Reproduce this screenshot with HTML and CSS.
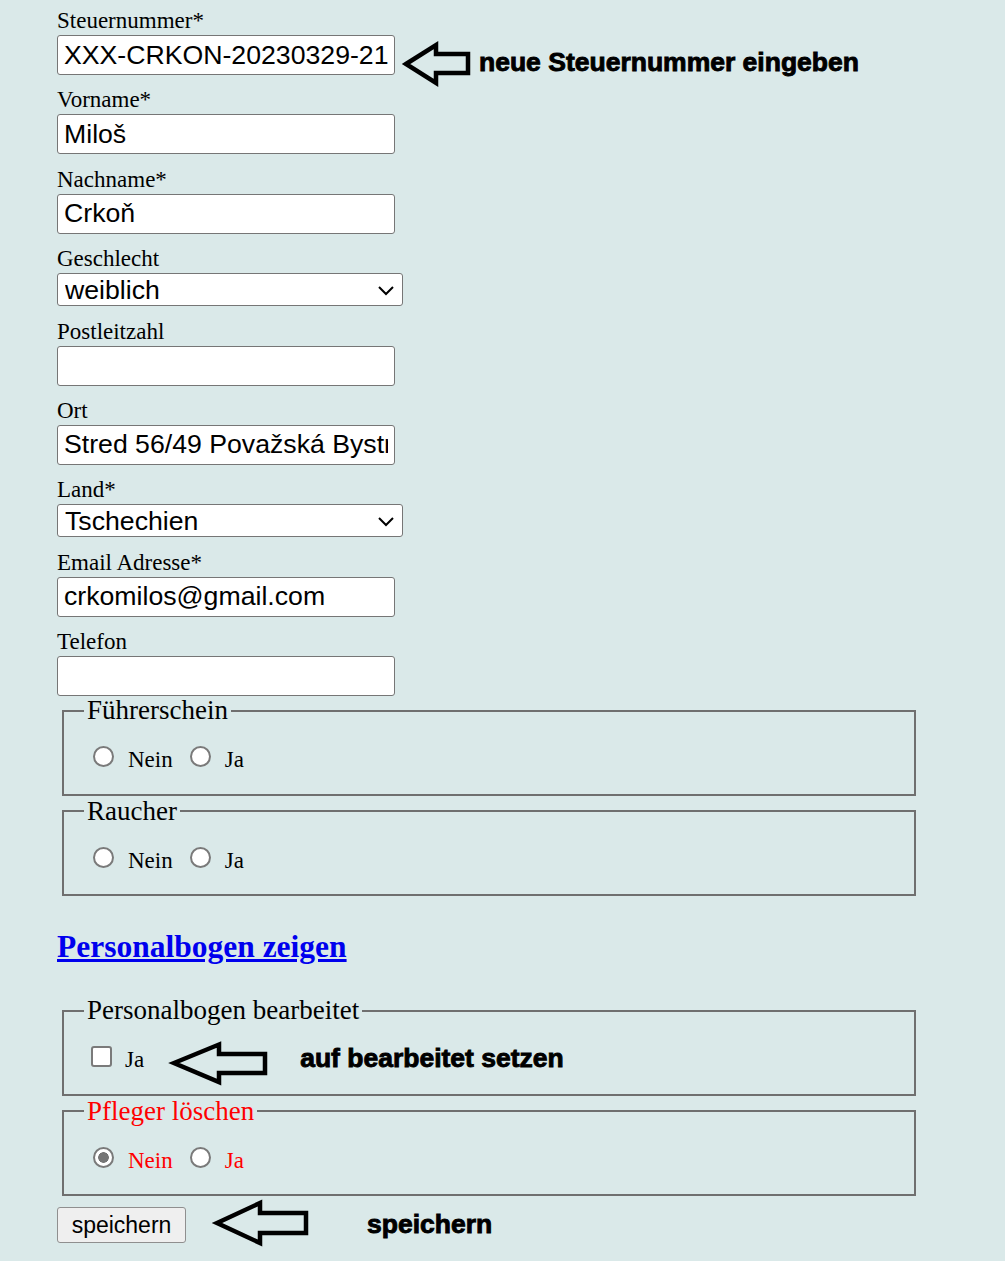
FILE: index.html
```html
<!DOCTYPE html>
<html lang="de">
<head>
<meta charset="utf-8">
<title>Pfleger bearbeiten</title>
<link rel="stylesheet" href="styles.css">
</head>
<body>
<form class="page">
  <div class="field">
    <label class="lbl" for="st">Steuernummer*</label>
    <div class="row">
      <input class="txt" id="st" type="text" value="XXX-CRKON-20230329-2145">
      <svg class="arrow a1" viewBox="0 0 68 44"><polygon points="3,22 33,3 33,12 65,12 65,31 33,31 33,41"/></svg>
      <span class="note n1">neue Steuernummer eingeben</span>
    </div>
  </div>
  <div class="field">
    <label class="lbl" for="vn">Vorname*</label>
    <input class="txt" id="vn" type="text" value="Miloš">
  </div>
  <div class="field">
    <label class="lbl" for="nn">Nachname*</label>
    <input class="txt" id="nn" type="text" value="Crkoň">
  </div>
  <div class="field">
    <label class="lbl" for="gs">Geschlecht</label>
    <div class="select-wrap">
      <select class="sel" id="gs">
        <option>männlich</option>
        <option selected>weiblich</option>
        <option>divers</option>
      </select>
      <svg class="chev" viewBox="0 0 16 9"><polyline points="1,1 8,8 15,1"/></svg>
    </div>
  </div>
  <div class="field">
    <label class="lbl" for="plz">Postleitzahl</label>
    <input class="txt" id="plz" type="text" value="">
  </div>
  <div class="field">
    <label class="lbl" for="ort">Ort</label>
    <input class="txt" id="ort" type="text" value="Stred 56/49 Považská Bystrica">
  </div>
  <div class="field">
    <label class="lbl" for="land">Land*</label>
    <div class="select-wrap">
      <select class="sel" id="land">
        <option>Deutschland</option>
        <option>Österreich</option>
        <option>Slowakei</option>
        <option selected>Tschechien</option>
      </select>
      <svg class="chev" viewBox="0 0 16 9"><polyline points="1,1 8,8 15,1"/></svg>
    </div>
  </div>
  <div class="field">
    <label class="lbl" for="em">Email Adresse*</label>
    <input class="txt" id="em" type="text" value="crkomilos@gmail.com">
  </div>
  <div class="field">
    <label class="lbl" for="tel">Telefon</label>
    <input class="txt" id="tel" type="text" value="">
  </div>

  <fieldset class="box first">
    <legend>Führerschein</legend>
    <input class="rad r1" type="radio" name="fs" id="fs0"><label for="fs0">Nein</label><input class="rad r2" type="radio" name="fs" id="fs1"><label for="fs1">Ja</label>
  </fieldset>
  <fieldset class="box">
    <legend>Raucher</legend>
    <input class="rad r1" type="radio" name="ra" id="ra0"><label for="ra0">Nein</label><input class="rad r2" type="radio" name="ra" id="ra1"><label for="ra1">Ja</label>
  </fieldset>

  <p class="show"><a href="#">Personalbogen zeigen</a></p>

  <fieldset class="box">
    <legend>Personalbogen bearbeitet</legend>
    <input class="chk" type="checkbox" id="pb"><label for="pb">Ja</label><svg class="arrow a2" viewBox="0 0 96 43"><polygon points="3,21 48,2.5 48,12 94,12 94,31 48,31 48,40"/></svg><span class="note n2">auf bearbeitet setzen</span>
  </fieldset>
  <fieldset class="box danger">
    <legend>Pfleger löschen</legend>
    <input class="rad r1" type="radio" name="del" id="del0" checked><label for="del0">Nein</label><input class="rad r2" type="radio" name="del" id="del1"><label for="del1">Ja</label>
  </fieldset>

  <div class="row btnrow">
    <button class="btn" type="button">speichern</button>
    <svg class="arrow a3" viewBox="0 0 95 44"><polygon points="3,22 46,2 46,12 92,12 92,32 46,32 46,42"/></svg>
    <span class="note n3">speichern</span>
  </div>
</form>
</body>
</html>
```

FILE: styles.css
```css
html, body {
  margin: 0;
  padding: 0;
}

body {
  background: #dae9e9;
  color: #000;
  font-family: "Liberation Serif", "Times New Roman", serif;
}

.page {
  display: block;
  padding: 8px 0 20px 57px;
}

.field + .field {
  margin-top: 12.4px;
}

.lbl {
  display: block;
  font-size: 23px;
  line-height: 26px;
  margin-bottom: 1px;
}

.txt {
  display: block;
  box-sizing: border-box;
  width: 338px;
  height: 40px;
  margin: 0;
  padding: 0 6px;
  border: 1px solid #767676;
  border-radius: 3px;
  background: #fff;
  color: #000;
  font-family: "Liberation Sans", Arial, sans-serif;
  font-size: 26.67px;
}

.row {
  display: flex;
  align-items: flex-start;
}

.arrow {
  flex: none;
  overflow: visible;
}

.arrow polygon {
  fill: none;
  stroke: #000;
  stroke-width: 4.5;
  stroke-linejoin: miter;
}

.a1 {
  width: 68px;
  height: 44px;
  margin: 7px 0 -11px 8px;
}

.note {
  font-family: "Liberation Sans", Arial, sans-serif;
  font-weight: bold;
  font-size: 26.5px;
  line-height: 30px;
  white-space: nowrap;
  -webkit-text-stroke: 0.9px #000;
}

.n1 {
  margin: 12px 0 -2px 8px;
}

.select-wrap {
  position: relative;
  width: 346px;
  height: 33px;
}

.sel {
  -webkit-appearance: none;
  appearance: none;
  display: block;
  box-sizing: border-box;
  width: 346px;
  height: 33px;
  margin: 0;
  padding: 0 0 0 7px;
  border: 1px solid #767676;
  border-radius: 3px;
  background: #fff;
  color: #000;
  font-family: "Liberation Sans", Arial, sans-serif;
  font-size: 26.67px;
}

.chev {
  position: absolute;
  right: 9px;
  top: 13px;
  width: 16px;
  height: 9px;
  pointer-events: none;
  overflow: visible;
}

.chev polyline {
  fill: none;
  stroke: #000;
  stroke-width: 2;
}

.box {
  box-sizing: border-box;
  width: 854px;
  min-inline-size: auto;
  margin: 0 0 0 5px;
  padding: 20px 20px 20.5px;
  border: 2px solid #6f6f6f;
  font-size: 23px;
  line-height: normal;
}

.box.first {
  margin-top: -1px;
}

.box legend {
  font-size: 27px;
  line-height: normal;
  padding: 0 3px;
}

.rad {
  -webkit-appearance: none;
  appearance: none;
  box-sizing: border-box;
  width: 21px;
  height: 21px;
  margin: 0;
  border: 2px solid #7a7a7a;
  border-radius: 50%;
  background: #fff;
  vertical-align: baseline;
}

.rad:checked {
  background: radial-gradient(circle, #767676 0 5px, #fff 5.6px);
}

.r1 {
  margin-left: 9px;
  margin-right: 14px;
}

.r2 {
  margin-left: 17px;
  margin-right: 14px;
}

.danger legend,
.danger label {
  color: #ff0000;
}

.chk {
  -webkit-appearance: none;
  appearance: none;
  box-sizing: border-box;
  width: 21px;
  height: 21px;
  margin: 0 13px 0 7px;
  border: 2px solid #7a7a7a;
  border-radius: 3px;
  background: #fff;
  vertical-align: baseline;
}

.a2 {
  width: 96px;
  height: 43px;
  margin: -4px 0 -18px 27px;
  vertical-align: baseline;
}

.n2 {
  line-height: 20px;
  margin-left: 33px;
}

.show {
  margin: 33px 0 30px;
  font-size: 31.5px;
  font-weight: bold;
  line-height: normal;
}

.show a {
  color: #0000ee;
  text-decoration: underline;
}

.btnrow {
  margin-top: 11px;
}

.btn {
  box-sizing: border-box;
  width: 129px;
  height: 36px;
  margin: 0;
  padding: 0;
  border: 1px solid #8f8f8f;
  border-radius: 3px;
  background: #efefef;
  color: #000;
  font-family: "Liberation Sans", Arial, sans-serif;
  font-size: 23px;
}

.a3 {
  width: 95px;
  height: 44px;
  margin: -6px 0 -2px 28px;
}

.n3 {
  margin: 2px 0 0 58px;
}
```
